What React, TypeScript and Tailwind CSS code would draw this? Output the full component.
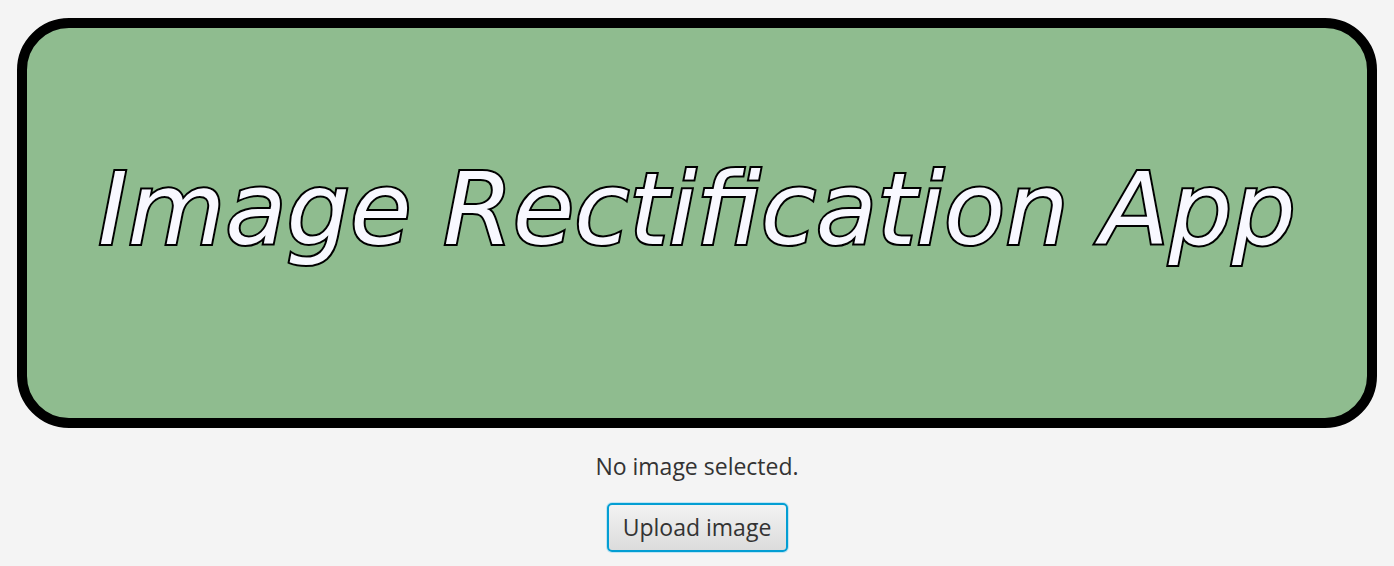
export default function App() {
  return (
    <div className="w-[1394px] h-[566px] bg-[#f4f4f4] flex flex-col items-center pt-[18px] overflow-hidden">
      <div className="w-[1360px] h-[410px] rounded-[52px] border-[10px] border-black bg-[#8fbc8f] flex items-center justify-center">
        <span className="italic font-['DejaVu_Sans',sans-serif] text-[#f8f8ff] text-[100px] leading-none [-webkit-text-stroke:4px_black] [paint-order:stroke_fill] mt-[-26px]">
          Image Rectification App
        </span>
      </div>
      <div className="mt-[22px] font-['Open_Sans','Noto_Sans',sans-serif] text-[23px] leading-[32px] text-[#333333]">
        No image selected.
      </div>
      <button className="mt-[21px] w-[181px] h-[49px] rounded-[5px] border-2 border-[#039ed3] shadow-[0_0_0_1px_#bfe4f3] bg-gradient-to-b from-[#f2f2f2] to-[#dcdcdc] font-['Open_Sans','Noto_Sans',sans-serif] text-[23px] text-[#333333] flex items-center justify-center">
        Upload image
      </button>
    </div>
  );
}
